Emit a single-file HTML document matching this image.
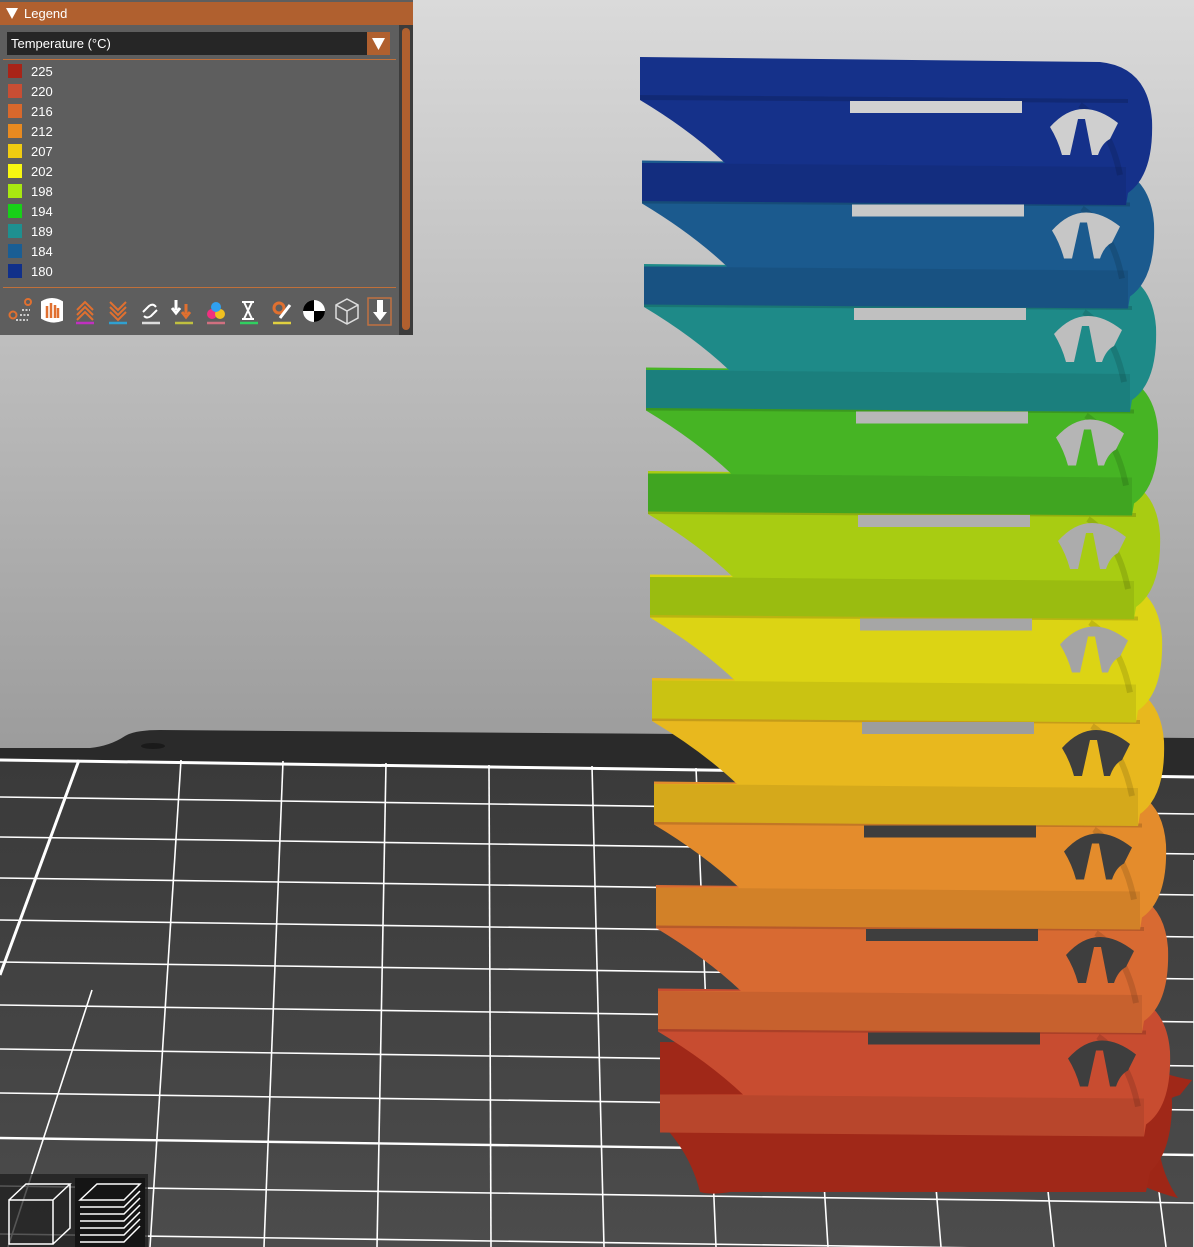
<!DOCTYPE html>
<html><head><meta charset="utf-8"><style>
body{margin:0;width:1194px;height:1247px;overflow:hidden;font-family:"Liberation Sans",sans-serif;}
#bg{position:absolute;left:0;top:0;width:1194px;height:1247px}
#legend{position:absolute;left:0;top:0;width:413px;height:335px;background:#5e5e5e;}
#hdr{position:absolute;left:0;top:2px;width:413px;height:23px;background:#b0602f;color:#fff;font-size:13px;line-height:23px}
#hdr span{position:absolute;left:24px}
#dd{position:absolute;left:7px;top:32px;width:383px;height:23px;background:#262626;color:#fff;font-size:13px;line-height:23px}
#dd span{position:absolute;left:4px}
#ddb{position:absolute;right:0;top:0;width:23px;height:23px;background:#b0602f}
.sep{position:absolute;left:3px;width:393px;height:1px;background:#c0703a}
.it{position:absolute;left:8px;height:14px;color:#fff;font-size:13px;line-height:14px}
.it i{position:absolute;left:0;top:0;width:14px;height:14px}
.it span{position:absolute;left:23px;top:1px}
#sb{position:absolute;left:399px;top:25px;width:14px;height:310px;background:#3c3c3c}
#sb div{position:absolute;left:3px;top:3px;width:8px;height:302px;border-radius:4px;background:#b0602f}
</style></head><body>
<svg id="bg" width="1194" height="1247" viewBox="0 0 1194 1247">
<defs>
<linearGradient id="sky" x1="0" y1="0" x2="0" y2="1"><stop offset="0" stop-color="#dadada"/><stop offset="1" stop-color="#9c9c9c"/></linearGradient>
<linearGradient id="fl" x1="0" y1="0" x2="0" y2="1"><stop offset="0" stop-color="#3a3a3a"/><stop offset="1" stop-color="#4c4c4c"/></linearGradient>
</defs>
<rect width="1194" height="750" fill="url(#sky)"/>
<path d="M0,748 L90,748 Q110,746 125,736 Q135,730 160,730 L1194,738 L1194,1247 L0,1247 Z" fill="#2a2a2a"/>
<path d="M0,760 L1194,777 L1194,1247 L0,1247 Z" fill="url(#fl)"/>
<ellipse cx="153" cy="746" rx="12" ry="3" fill="#1a1a1a"/>
<g stroke="#ffffff" stroke-width="1.6" fill="none">
<line x1="0" y1="760" x2="1194" y2="777" stroke-width="3"/>
<line x1="0" y1="797" x2="1194" y2="814"/>
<line x1="0" y1="837" x2="1194" y2="854"/>
<line x1="0" y1="878" x2="1194" y2="895"/>
<line x1="0" y1="920" x2="1194" y2="937"/>
<line x1="0" y1="962" x2="1194" y2="979"/>
<line x1="0" y1="1005" x2="1194" y2="1022"/>
<line x1="0" y1="1049" x2="1194" y2="1066"/>
<line x1="0" y1="1093" x2="1194" y2="1110"/>
<line x1="0" y1="1138" x2="1194" y2="1155" stroke-width="2.4"/>
<line x1="0" y1="1186" x2="1194" y2="1203"/>
<line x1="0" y1="1234" x2="1194" y2="1251"/>
<line x1="79" y1="760" x2="0" y2="975" stroke-width="3"/>
<line x1="92" y1="990" x2="8" y2="1247"/>
<line x1="181" y1="760" x2="150" y2="1247"/>
<line x1="283" y1="761" x2="264" y2="1247"/>
<line x1="386" y1="763" x2="377" y2="1247"/>
<line x1="489" y1="765" x2="491" y2="1247"/>
<line x1="592" y1="766" x2="604" y2="1247"/>
<line x1="696" y1="768" x2="716" y2="1247"/>
<line x1="798" y1="769" x2="828" y2="1247"/>
<line x1="901" y1="771" x2="941" y2="1247"/>
<line x1="1003" y1="772" x2="1054" y2="1247"/>
<line x1="1106" y1="774" x2="1166" y2="1247"/>
<line x1="1194" y1="860" x2="1194" y2="1247"/>
</g>
<path d="M1140,1060 Q1160,1075 1192,1080 L1180,1095 Q1160,1100 1150,1120 Z" fill="#a02818"/>
<path d="M745,1132 Q770,1142 790,1135 L1100,1138 Q1140,1145 1160,1155 Q1165,1180 1178,1198 Q1140,1188 1110,1168 L790,1163 Q760,1175 740,1190 Q715,1196 700,1192 Q722,1180 735,1160 Q740,1145 745,1132 Z" fill="#9e2616"/>
<g id="blocks"></g>
</svg>
<script>
var cols=["#15318a","#1b5a8e","#1e8a88","#46b424","#a8cc12","#dcd414","#e8b81e","#e48c2c","#d86a32","#c84c30","#a82818"];
function bgAt(y){if(y>745)return '#3e3e3e';var v=Math.round(0xda-y/745*(0xda-0x9c));var s=v.toString(16);return '#'+s+s+s;}
var g=document.getElementById('blocks');var h='';
h+='<g transform="translate(660,1042)"><path d="M0,0 L480,4 Q510,10 512,60 Q512,110 490,130 L486,150 L40,150 Q30,110 0,80 Z" fill="#a02818"/></g>';
for(var i=9;i>=0;i--){
 var x=640+i*2, y=55+i*103.5;
 var c1=cols[i];
 var bgs=bgAt(y+52), bgh=bgAt(y+80);
 h+='<g transform="translate('+x+','+y+')">';
 h+='<path d="M0,2 L460,7 Q508,12 512,65 Q514,120 488,138 L486,150 L2,146 L2,108 L85,108 Q50,75 0,45 Z" fill="'+c1+'"/>';
 h+='<path d="M2,108 L486,112 L486,150 L2,146 Z" fill="#000" opacity="0.08"/>';
 h+='<path d="M0,40 L488,44 L488,48 L0,45 Z" fill="#000" opacity="0.15"/>';
 h+='<path d="M440,50 Q470,70 480,120" stroke="#000" stroke-opacity="0.12" stroke-width="6" fill="none"/>';
 h+='<rect x="210" y="46" width="172" height="12" fill="'+bgs+'"/>';
 h+='<path d="M410,72 Q440,38 478,68 L470,84 Q462,88 458,100 L452,100 L445,64 L438,64 L430,100 L422,100 Q418,85 410,72 Z" fill="'+bgh+'"/>';
 h+='</g>';
}
g.innerHTML=h;
</script>
<div id="legend">
<div id="hdr"><svg style="position:absolute;left:6px;top:6px" width="12" height="11"><path d="M0,0 L12,0 L6,11Z" fill="#fff"/></svg><span>Legend</span></div>
<div id="dd"><span>Temperature (°C)</span><div id="ddb"><svg style="position:absolute;left:5px;top:6px" width="13" height="12"><path d="M0,0 L13,0 L6.5,12Z" fill="#fff"/></svg></div></div>
<div class="sep" style="top:59px"></div>
<div class="it" style="top:64px"><i style="background:#a82418"></i><span>225</span></div>
<div class="it" style="top:84px"><i style="background:#c84e34"></i><span>220</span></div>
<div class="it" style="top:104px"><i style="background:#d8682c"></i><span>216</span></div>
<div class="it" style="top:124px"><i style="background:#e88a20"></i><span>212</span></div>
<div class="it" style="top:144px"><i style="background:#f0cc10"></i><span>207</span></div>
<div class="it" style="top:164px"><i style="background:#f8f810"></i><span>202</span></div>
<div class="it" style="top:184px"><i style="background:#a8e810"></i><span>198</span></div>
<div class="it" style="top:204px"><i style="background:#18d018"></i><span>194</span></div>
<div class="it" style="top:224px"><i style="background:#1e9090"></i><span>189</span></div>
<div class="it" style="top:244px"><i style="background:#1a5e94"></i><span>184</span></div>
<div class="it" style="top:264px"><i style="background:#10308a"></i><span>180</span></div>
<div class="sep" style="top:287px"></div>
<svg style="position:absolute;left:0;top:292px" width="400" height="40" viewBox="0 292 400 40">
<g fill="none" stroke-width="2">
<circle cx="13" cy="315" r="3.5" stroke="#e07030"/><circle cx="28" cy="302" r="3" stroke="#e07030"/>
<path d="M16,320 H28 M20,315 H30 M22,310 H30" stroke="#ccc" stroke-dasharray="2 1.5"/>
<path d="M42,302 Q52,296 62,302 L62,320 Q52,324 42,318 Z" fill="#fff" stroke="#fff"/>
<path d="M47,318 L47,306 M51,318 L51,303 M55,318 L55,305 M58,318 L58,308" stroke="#e07030" stroke-width="2.5"/>
<path d="M77,310 L85,302 L93,310 M77,315 L85,307 L93,315 M77,320 L85,312 L93,320" stroke="#e07030"/>
<path d="M76,323 H94" stroke="#c030c0" stroke-width="2.5"/>
<path d="M110,302 L118,310 L126,302 M110,307 L118,315 L126,307 M110,312 L118,320 L126,312" stroke="#e07030"/>
<path d="M109,323 H127" stroke="#30a0d0" stroke-width="2.5"/>
<path d="M143,312 L149,306 Q153,303 156,307 M157,310 L151,316 Q147,319 144,316" stroke="#fff"/>
<path d="M142,323 H160" stroke="#ddd" stroke-width="2.5"/>
<path d="M176,300 V310 M172,308 L176,313 L180,308" stroke="#fff" stroke-width="3"/>
<path d="M186,304 V314 M182,312 L186,317 L190,312" stroke="#e07030" stroke-width="3"/>
<path d="M175,323 H193" stroke="#c0c040" stroke-width="2.5"/>
<circle cx="212" cy="314" r="5" fill="#f03080" stroke="none"/><circle cx="220" cy="314" r="5" fill="#f0c020" stroke="none"/><circle cx="216" cy="307" r="5" fill="#30a0f0" stroke="none"/>
<path d="M207,323 H225" stroke="#d07080" stroke-width="2.5"/>
<path d="M242,302 H254 M242,319 H254 M244,302 L252,319 M252,302 L244,319" stroke="#fff"/>
<path d="M240,323 H258" stroke="#30d060" stroke-width="2.5"/>
<circle cx="279" cy="308" r="5" stroke="#e07030" stroke-width="3"/>
<path d="M280,318 L290,305" stroke="#fff" stroke-width="3"/>
<path d="M273,323 H291" stroke="#e0d040" stroke-width="2.5"/>
<circle cx="314" cy="311" r="11" fill="#fff" stroke="none"/>
<path d="M314,300 A11,11 0 0 0 303,311 H314 Z M314,322 A11,11 0 0 0 325,311 H314 Z" fill="#000" stroke="none"/>
<path d="M347,299 L358,305 V318 L347,324 L336,318 V305 Z M336,305 L347,311 L358,305 M347,311 V324" stroke="#ddd" stroke-width="1.5"/>
<rect x="368" y="298" width="23" height="27" stroke="#c07040" stroke-width="1.5"/>
<path d="M377,300 H383 V312 H387 L380,321 L373,312 H377 Z" fill="#fff" stroke="none"/>
</g></svg>
<div id="sb"><div></div></div>
</div>
<div style="position:absolute;left:0;top:1174px;width:148px;height:73px;background:rgba(30,30,30,0.75)"></div>
<div style="position:absolute;left:75px;top:1178px;width:70px;height:69px;background:#151515"></div>
<svg style="position:absolute;left:0;top:1165px" width="160" height="82">
<g fill="none" stroke="#fff" stroke-width="1.5">
<path d="M9,35 H53 V79 H9 Z M9,35 L26,19 H70 L53,35 M70,19 V63 L53,79"/>
<path d="M80,35 L97,19 H140 L124,35 Z"/>
<path d="M80,42 H124 L140,26 M80,49 H124 L140,33 M80,56 H124 L140,40 M80,63 H124 L140,47 M80,70 H124 L140,54 M80,77 H124 L140,61"/>
</g></svg>
</body></html>
